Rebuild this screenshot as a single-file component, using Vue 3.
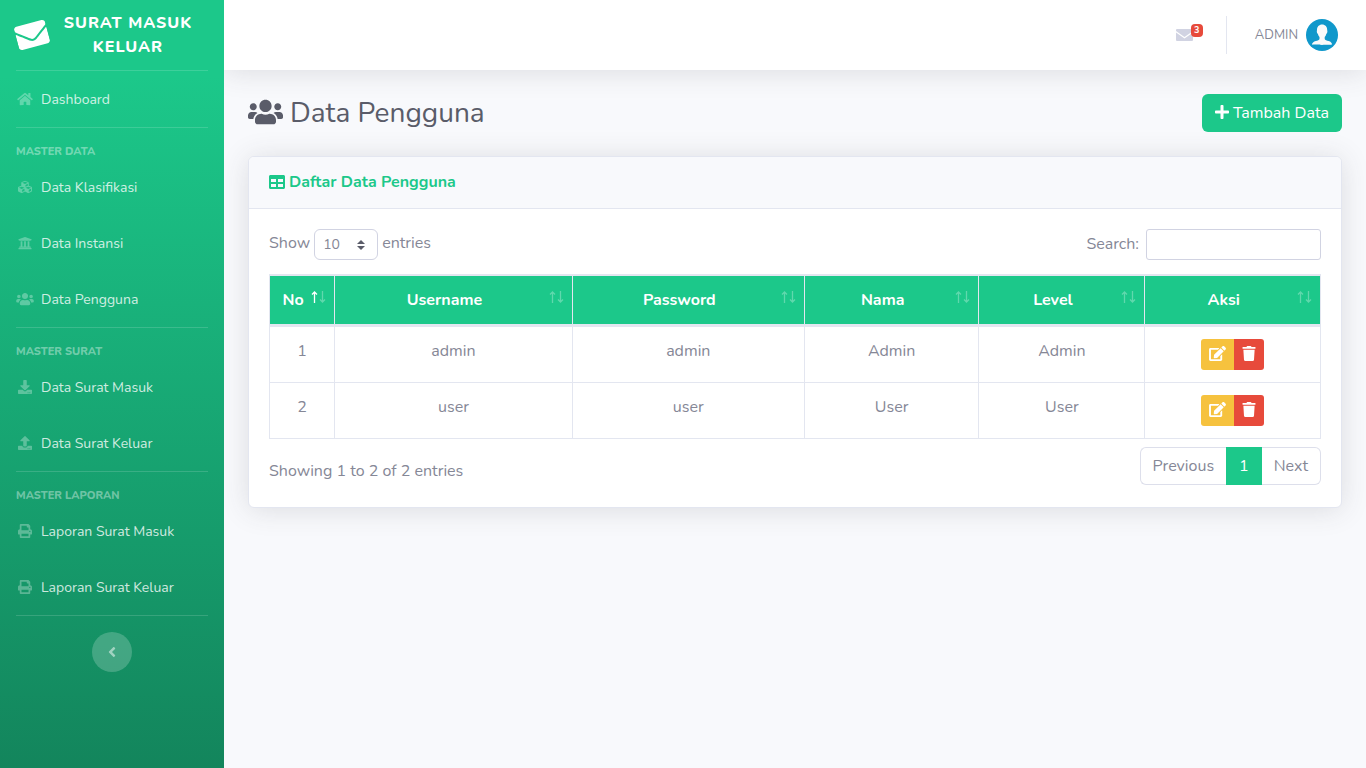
<script setup>
import { ref } from 'vue'

const icons = {
  home: { w: 576, d: 'M280.37 148.26L96 300.11V464a16 16 0 0 0 16 16l112.06-.29a16 16 0 0 0 15.92-16V368a16 16 0 0 1 16-16h64a16 16 0 0 1 16 16v95.64a16 16 0 0 0 16 16.05L464 480a16 16 0 0 0 16-16V300L295.67 148.26a12.19 12.19 0 0 0-15.3 0zM571.6 251.47L488 182.56V44.05a12 12 0 0 0-12-12h-56a12 12 0 0 0-12 12v72.61L318.47 43a48 48 0 0 0-61 0L4.34 251.47a12 12 0 0 0-1.6 16.9l25.5 31A12 12 0 0 0 45.15 301l235.22-193.74a12.19 12.19 0 0 1 15.3 0L530.9 301a12 12 0 0 0 16.9-1.6l25.5-31a12 12 0 0 0-1.7-16.93z' },
  cubes: { w: 512, d: 'M488.6 250.2L392 214V105.5c0-15-9.3-28.4-23.4-33.7l-100-37.5c-8.1-3.1-17.1-3.1-25.3 0l-100 37.5c-14.1 5.3-23.4 18.7-23.4 33.7V214l-96.6 36.2C9.3 255.5 0 268.9 0 283.9V394c0 13.6 7.7 26.1 19.9 32.2l100 50c10.1 5.1 22.1 5.1 32.2 0l103.9-52 103.9 52c10.1 5.1 22.1 5.1 32.2 0l100-50c12.2-6.1 19.9-18.6 19.9-32.2V283.9c0-15-9.3-28.4-23.4-33.7zM358 214.8l-85 31.9v-68.2l85-37v73.3zM154 104.1l102-38.2 102 38.2v.6l-102 41.4-102-41.4v-.6zm84 291.1l-85 42.5v-79.1l85-38.8v75.4zm0-112l-102 41.4-102-41.4v-.6l102-38.2 102 38.2v.6zm240 112l-85 42.5v-79.1l85-38.8v75.4zm0-112l-102 41.4-102-41.4v-.6l102-38.2 102 38.2v.6z' },
  university: { w: 512, d: 'M496 128v16a8 8 0 0 1-8 8h-24v12c0 6.627-5.373 12-12 12H60c-6.627 0-12-5.373-12-12v-12H24a8 8 0 0 1-8-8v-16a8 8 0 0 1 4.941-7.392l232-88a7.996 7.996 0 0 1 6.118 0l232 88A8 8 0 0 1 496 128zm-24 304H40c-13.255 0-24 10.745-24 24v16a8 8 0 0 0 8 8h464a8 8 0 0 0 8-8v-16c0-13.255-10.745-24-24-24zM96 192v192H60c-6.627 0-12 5.373-12 12v20h416v-20c0-6.627-5.373-12-12-12h-36V192h-64v192h-64V192h-64v192h-64V192H96z' },
  users: { w: 640, d: 'M96 224c35.3 0 64-28.7 64-64s-28.7-64-64-64-64 28.7-64 64 28.7 64 64 64zm448 0c35.3 0 64-28.7 64-64s-28.7-64-64-64-64 28.7-64 64 28.7 64 64 64zm32 32h-64c-17.6 0-33.5 7.1-45.1 18.6 40.3 22.1 68.9 62 75.1 109.4h66c17.7 0 32-14.3 32-32v-32c0-35.3-28.7-64-64-64zm-256 0c61.9 0 112-50.1 112-112S381.9 32 320 32 208 82.1 208 144s50.1 112 112 112zm76.8 32h-8.3c-20.8 10-43.9 16-68.5 16s-47.6-6-68.5-16h-8.3C179.6 288 128 339.6 128 403.2V432c0 26.5 21.5 48 48 48h288c26.5 0 48-21.5 48-48v-28.8c0-63.6-51.6-115.2-115.2-115.2zm-223.7-13.4C161.5 263.1 145.6 256 128 256H64c-35.3 0-64 28.7-64 64v32c0 17.7 14.3 32 32 32h65.9c6.3-47.4 34.9-87.3 75.2-109.4z' },
  download: { w: 512, d: 'M216 0h80c13.3 0 24 10.7 24 24v168h87.7c17.8 0 26.7 21.5 14.1 34.1L269.7 378.3c-7.5 7.5-19.8 7.5-27.3 0L90.1 226.1c-12.6-12.6-3.7-34.1 14.1-34.1H192V24c0-13.3 10.7-24 24-24zm296 376v112c0 13.3-10.7 24-24 24H24c-13.3 0-24-10.7-24-24V376c0-13.3 10.7-24 24-24h146.7l49 49c20.1 20.1 52.5 20.1 72.6 0l49-49H488c13.3 0 24 10.7 24 24zm-124 88c0-11-9-20-20-20s-20 9-20 20 9 20 20 20 20-9 20-20zm64 0c0-11-9-20-20-20s-20 9-20 20 9 20 20 20 20-9 20-20z' },
  upload: { w: 512, d: 'M296 384h-80c-13.3 0-24-10.7-24-24V192h-87.7c-17.8 0-26.7-21.5-14.1-34.1L242.3 5.7c7.5-7.5 19.8-7.5 27.3 0l152.2 152.2c12.6 12.6 3.7 34.1-14.1 34.1H320v168c0 13.3-10.7 24-24 24zm216-8v112c0 13.3-10.7 24-24 24H24c-13.3 0-24-10.7-24-24V376c0-13.3 10.7-24 24-24h136v8c0 30.9 25.1 56 56 56h80c30.9 0 56-25.1 56-56v-8h136c13.3 0 24 10.7 24 24zm-124 88c0-11-9-20-20-20s-20 9-20 20 9 20 20 20 20-9 20-20zm64 0c0-11-9-20-20-20s-20 9-20 20 9 20 20 20 20-9 20-20z' },
  print: { w: 512, d: 'M448 192V77.25c0-8.49-3.37-16.62-9.37-22.63L393.37 9.37c-6-6-14.14-9.37-22.63-9.37H96C78.33 0 64 14.33 64 32v160c-35.35 0-64 28.65-64 64v112c0 8.84 7.16 16 16 16h48v96c0 17.67 14.33 32 32 32h320c17.67 0 32-14.33 32-32v-96h48c8.84 0 16-7.16 16-16V256c0-35.35-28.65-64-64-64zm-64 256H128v-96h256v96zm0-224H128V64h192v48c0 8.84 7.16 16 16 16h48v96zm48 72c-13.25 0-24-10.75-24-24 0-13.26 10.75-24 24-24s24 10.74 24 24c0 13.25-10.75 24-24 24z' },
}

const groups = [
  { title: '', links: [{ label: 'Dashboard', icon: 'home' }] },
  {
    title: 'Master Data',
    links: [
      { label: 'Data Klasifikasi', icon: 'cubes' },
      { label: 'Data Instansi', icon: 'university' },
      { label: 'Data Pengguna', icon: 'users' },
    ],
  },
  {
    title: 'Master Surat',
    links: [
      { label: 'Data Surat Masuk', icon: 'download' },
      { label: 'Data Surat Keluar', icon: 'upload' },
    ],
  },
  {
    title: 'Master Laporan',
    links: [
      { label: 'Laporan Surat Masuk', icon: 'print' },
      { label: 'Laporan Surat Keluar', icon: 'print' },
    ],
  },
]

const columns = [
  { key: 'no', label: 'No' },
  { key: 'username', label: 'Username' },
  { key: 'password', label: 'Password' },
  { key: 'nama', label: 'Nama' },
  { key: 'level', label: 'Level' },
  { key: 'aksi', label: 'Aksi' },
]

const rows = [
  { no: 1, username: 'admin', password: 'admin', nama: 'Admin', level: 'Admin' },
  { no: 2, username: 'user', password: 'user', nama: 'User', level: 'User' },
]

const pageSize = ref('10')
const search = ref('')
</script>

<template>
  <div class="layout">
    <nav class="sidebar">
      <a class="brand" href="#">
        <svg class="brand-icon" viewBox="0 0 512 512" aria-hidden="true">
          <path d="M502.3 190.8c3.9-3.1 9.7-.2 9.7 4.7V400c0 26.5-21.5 48-48 48H48c-26.5 0-48-21.5-48-48V195.6c0-5 5.7-7.8 9.7-4.7 22.4 17.4 52.1 39.5 154.1 113.6 21.1 15.4 56.7 47.8 92.2 47.6 35.7.3 72-32.8 92.3-47.6 102-74.1 131.6-96.3 154-113.7zM256 320c23.2.4 56.6-29.2 73.4-41.4 132.7-96.3 142.8-104.7 173.4-128.7 5.8-4.5 9.2-11.5 9.2-18.9v-19c0-26.5-21.5-48-48-48H48c-26.5 0-48 21.5-48 48v19c0 7.4 3.4 14.3 9.2 18.9 30.6 23.9 40.7 32.4 173.4 128.7 16.8 12.2 50.2 41.8 73.4 41.4z" />
        </svg>
        <span class="brand-text">Surat Masuk Keluar</span>
      </a>
      <div v-for="group in groups" :key="group.title" class="group">
        <div v-if="group.title" class="group-title">{{ group.title }}</div>
        <a v-for="link in group.links" :key="link.label" class="nav-link" href="#">
          <svg class="nav-icon" :viewBox="`0 0 ${icons[link.icon].w} 512`" aria-hidden="true">
            <path :d="icons[link.icon].d" />
          </svg>
          <span>{{ link.label }}</span>
        </a>
      </div>
      <div class="sidebar-end">
        <button class="toggle" type="button" aria-label="Toggle sidebar">
          <svg viewBox="0 0 256 512" aria-hidden="true">
            <path d="M31.7 239l136-136c9.4-9.4 24.6-9.4 33.9 0l22.6 22.6c9.4 9.4 9.4 24.6 0 33.9L127.9 256l96.4 96.4c9.4 9.4 9.4 24.6 0 33.9L201.7 409c-9.4 9.4-24.6 9.4-33.9 0l-136-136c-9.5-9.4-9.5-24.6-.1-34z" />
          </svg>
        </button>
      </div>
    </nav>

    <div class="content">
      <header class="topbar">
        <a class="messages" href="#" aria-label="Messages">
          <svg viewBox="0 0 17 12" aria-hidden="true">
            <path d="M1 0h15q1 0 1 1v1L8.500 8 0 2V1q0-1 1-1z" />
            <path d="M0 3.500L8.500 9.500 17 3.500V11q0 1-1 1H1q-1 0-1-1z" />
          </svg>
          <span class="badge">3</span>
        </a>
        <div class="divider"></div>
        <a class="user" href="#">
          <span>ADMIN</span>
          <svg class="avatar" viewBox="0 0 32 32" aria-hidden="true">
            <circle cx="16" cy="16" r="16" fill="#1098cb" />
            <path fill="#fafafa" d="M16 5.500c3.300 0 5.300 2.300 5.200 5.600 0 .6.200.8.2 1.500 0 1-.6 1.900-1.100 2.300-.3 1.300-.9 2.300-1.600 3v2c.3 1 2 1.500 3.900 2.100 2.200.7 3.400 1.900 3.500 3.600-1.200.5-19 .5-20.200 0 .1-1.700 1.700-2.900 3.900-3.600 1.900-.6 3.400-1.100 3.700-2.100v-2c-.7-.7-1.300-1.700-1.600-3-.5-.4-1.100-1.300-1.100-2.300 0-.7.200-.9.2-1.500-.1-3.300 1.900-5.600 5.200-5.600z" />
          </svg>
        </a>
      </header>

      <main class="main">
        <div class="heading">
          <h1>
            <svg viewBox="0 0 640 512" aria-hidden="true"><path :d="icons.users.d" /></svg>
            <span>Data Pengguna</span>
          </h1>
          <a class="add" href="#">
            <svg viewBox="0 0 448 512" aria-hidden="true">
              <path d="M416 208H272V64c0-17.67-14.33-32-32-32h-32c-17.67 0-32 14.33-32 32v144H32c-17.67 0-32 14.33-32 32v32c0 17.67 14.33 32 32 32h144v144c0 17.67 14.33 32 32 32h32c17.67 0 32-14.33 32-32V304h144c17.67 0 32-14.33 32-32v-32c0-17.67-14.33-32-32-32z" />
            </svg>
            <span>Tambah Data</span>
          </a>
        </div>

        <section class="card">
          <div class="card-header">
            <h2>
              <svg viewBox="0 0 512 512" aria-hidden="true">
                <path d="M464 32H48C21.490 32 0 53.490 0 80v352c0 26.510 21.490 48 48 48h416c26.510 0 48-21.490 48-48V80c0-26.510-21.490-48-48-48zM224 416H64v-96h160v96zm0-160H64v-96h160v96zm224 160H288v-96h160v96zm0-160H288v-96h160v96z" />
              </svg>
              <span>Daftar Data Pengguna</span>
            </h2>
          </div>
          <div class="card-body">
            <div class="controls">
              <label class="length">
                Show
                <span class="select-wrap">
                  <select v-model="pageSize">
                    <option>10</option>
                    <option>25</option>
                    <option>50</option>
                    <option>100</option>
                  </select>
                  <svg viewBox="0 0 8 10" aria-hidden="true"><path d="M4 0l4 4H0zM4 10L0 6h8z" /></svg>
                </span>
                entries
              </label>
              <label class="search">
                Search:
                <input v-model="search" type="search" />
              </label>
            </div>

            <table>
              <colgroup>
                <col v-for="col in columns" :key="col.key" :class="`col-${col.key}`" />
              </colgroup>
              <thead>
                <tr>
                  <th v-for="(col, i) in columns" :key="col.key" scope="col">
                    {{ col.label }}
                    <svg class="sort" viewBox="0 0 16 14" aria-hidden="true">
                      <path :class="{ on: i === 0 }" d="M4.500 13V2M2 4.500l2.500-2.500 2.500 2.500" />
                      <path d="M12.500 1v11M10 9.500l2.500 2.500 2.500-2.500" />
                    </svg>
                  </th>
                </tr>
              </thead>
              <tbody>
                <tr v-for="row in rows" :key="row.no">
                  <td>{{ row.no }}</td>
                  <td>{{ row.username }}</td>
                  <td>{{ row.password }}</td>
                  <td>{{ row.nama }}</td>
                  <td>{{ row.level }}</td>
                  <td>
                    <div class="actions">
                      <button class="edit" type="button" aria-label="Edit">
                        <svg viewBox="0 0 576 512" aria-hidden="true">
                          <path d="M402.6 83.2l90.2 90.2c3.8 3.8 3.8 10 0 13.8L274.4 405.6l-92.8 10.3c-12.4 1.4-22.9-9.1-21.5-21.5l10.3-92.8L388.8 83.2c3.8-3.8 10-3.8 13.8 0zm162-22.9l-48.8-48.8c-15.2-15.2-39.9-15.2-55.2 0l-35.4 35.4c-3.8 3.8-3.8 10 0 13.8l90.2 90.2c3.8 3.8 10 3.8 13.8 0l35.4-35.4c15.2-15.3 15.2-40 0-55.2zM384 346.2V448H64V128h229.8c3.2 0 6.2-1.3 8.500-3.500l40-40c7.600-7.600 2.200-20.500-8.500-20.500H48C21.500 64 0 85.500 0 112v352c0 26.500 21.500 48 48 48h352c26.500 0 48-21.500 48-48V306.200c0-10.700-12.900-16-20.500-8.500l-40 40c-2.200 2.300-3.500 5.300-3.500 8.500z" />
                        </svg>
                      </button>
                      <button class="delete" type="button" aria-label="Hapus">
                        <svg viewBox="0 0 448 512" aria-hidden="true">
                          <path d="M432 32H312l-9.4-18.7A24 24 0 0 0 281.1 0H166.800a23.720 23.720 0 0 0-21.400 13.300L136 32H16A16 16 0 0 0 0 48v32a16 16 0 0 0 16 16h416a16 16 0 0 0 16-16V48a16 16 0 0 0-16-16zM53.200 467a48 48 0 0 0 47.900 45h245.800a48 48 0 0 0 47.900-45L416 128H32z" />
                        </svg>
                      </button>
                    </div>
                  </td>
                </tr>
              </tbody>
            </table>

            <div class="table-footer">
              <div class="info">Showing 1 to 2 of 2 entries</div>
              <nav class="pagination" aria-label="Pagination">
                <a href="#">Previous</a>
                <a class="active" href="#" aria-current="page">1</a>
                <a href="#">Next</a>
              </nav>
            </div>
          </div>
        </section>
      </main>
    </div>
  </div>
</template>

<style>
body {
  margin: 0;
}
</style>

<style scoped>
.layout,
.layout * {
  box-sizing: border-box;
}
.layout {
  display: flex;
  min-height: 100vh;
  font-family: Nunito, Lato, "Open Sans", sans-serif;
  font-size: 16px;
  line-height: 24px;
  color: #858796;
  background: #f8f9fc;
}
svg {
  display: block;
  flex: none;
  fill: currentColor;
}
a {
  color: inherit;
  text-decoration: none;
}
button,
select,
input {
  font: inherit;
  color: inherit;
}
button {
  cursor: pointer;
}

.sidebar {
  position: relative;
  z-index: 1;
  flex: none;
  width: 224px;
  background: linear-gradient(180deg, #1cc88a 10%, #13855c 100%);
}
.brand {
  display: flex;
  align-items: center;
  height: 70px;
  padding: 0 16px;
  color: #fff;
}
.brand-icon {
  width: 32px;
  height: 32px;
  transform: rotate(-15deg);
}
.brand-text {
  flex: 1;
  font-weight: 800;
  letter-spacing: 1px;
  text-align: center;
  text-transform: uppercase;
}
.group::before,
.sidebar-end::before {
  content: "";
  display: block;
  height: 1px;
  margin: 0 16px;
  background: rgba(255, 255, 255, 0.15);
}
.group-title {
  padding: 16px 16px 0;
  font-size: 11px;
  font-weight: 800;
  line-height: 15px;
  text-transform: uppercase;
  color: rgba(255, 255, 255, 0.4);
}
.nav-link {
  display: flex;
  align-items: center;
  gap: 7px;
  height: 56px;
  padding: 0 16px;
  font-size: 14px;
  color: rgba(255, 255, 255, 0.8);
}
.nav-link span {
  padding-top: 2px;
}
.nav-icon {
  width: 18px;
  height: 14px;
  color: rgba(255, 255, 255, 0.3);
}
.sidebar-end {
  display: grid;
  justify-items: center;
  gap: 16px;
}
.sidebar-end::before {
  justify-self: stretch;
}
.toggle {
  display: grid;
  place-items: center;
  width: 40px;
  height: 40px;
  padding: 0;
  border: 0;
  border-radius: 50%;
  background: rgba(255, 255, 255, 0.2);
  color: rgba(255, 255, 255, 0.5);
}
.toggle svg {
  width: 8px;
  height: 16px;
}

.content {
  flex: 1;
  min-width: 0;
}
.topbar {
  position: relative;
  display: flex;
  align-items: center;
  justify-content: flex-end;
  height: 70px;
  padding-right: 28px;
  background: #fff;
  box-shadow: 0 2px 28px rgba(58, 59, 69, 0.15);
}
.messages {
  position: relative;
  color: #d1d3e2;
}
.messages svg {
  width: 17px;
  height: 12px;
}
.badge {
  position: absolute;
  left: 15px;
  top: -5px;
  width: 12px;
  border-radius: 4px;
  background: #e74a3b;
  color: #fff;
  font-size: 9px;
  font-weight: 700;
  line-height: 13px;
  text-align: center;
}
.divider {
  width: 1px;
  height: 38px;
  margin: 0 28px 0 33px;
  background: #e3e6f0;
}
.user {
  display: flex;
  align-items: center;
  gap: 8px;
  font-size: 13px;
}
.avatar {
  width: 32px;
  height: 32px;
}

.main {
  padding: 24px;
}
.heading {
  display: flex;
  align-items: center;
  justify-content: space-between;
  margin-bottom: 24px;
}
h1 {
  display: flex;
  align-items: center;
  gap: 7px;
  margin: 0;
  font-size: 28px;
  font-weight: 400;
  line-height: 34px;
  color: #5a5c69;
}
h1 svg {
  width: 35px;
  height: 28px;
}
h1 svg,
h2 svg,
.add svg,
.actions svg {
  margin-bottom: 2px;
}
.add {
  display: flex;
  align-items: center;
  gap: 4px;
  height: 38px;
  padding: 0 13px;
  border-radius: 6px;
  background: #1cc88a;
  color: #fff;
}
.add svg {
  width: 14px;
  height: 16px;
}

.card {
  border: 1px solid #e3e6f0;
  border-radius: 6px;
  background: #fff;
  box-shadow: 0 2px 28px rgba(58, 59, 69, 0.15);
}
.card-header {
  padding: 16px 20px;
  border-bottom: 1px solid #e3e6f0;
  border-radius: 5px 5px 0 0;
  background: #f8f9fc;
}
h2 {
  display: flex;
  align-items: center;
  gap: 4px;
  margin: 0;
  font-size: 16px;
  font-weight: 700;
  line-height: 19px;
  color: #1cc88a;
}
h2 svg {
  width: 16px;
  height: 16px;
}
.card-body {
  padding: 20px;
}
.controls {
  display: flex;
  justify-content: space-between;
  margin-bottom: 14px;
}
.length,
.search {
  display: flex;
}
.length {
  gap: 4px;
  line-height: 28px;
}
.search {
  gap: 7px;
  line-height: 30px;
}
.select-wrap {
  position: relative;
}
.select-wrap svg {
  position: absolute;
  right: 13px;
  top: 11px;
  width: 8px;
  height: 10px;
  color: #5a5c69;
  pointer-events: none;
}
select,
input {
  display: block;
  height: 31px;
  border: 1px solid #d1d3e2;
  background: #fff;
  outline: 0;
}
select {
  width: 64px;
  padding: 0 8px;
  border-radius: 6px;
  font-size: 14px;
  appearance: none;
}
input {
  width: 175px;
  padding: 4px 8px;
  border-radius: 3px;
  font-size: 14px;
}

table {
  width: 100%;
  border: solid #e3e6f0;
  border-width: 1px 1px 1px 0;
  border-collapse: separate;
  border-spacing: 0;
  table-layout: fixed;
}
.col-no {
  width: 6.2%;
}
.col-username {
  width: 22.6%;
}
.col-password {
  width: 22.1%;
}
.col-nama {
  width: 16.6%;
}
.col-level {
  width: 15.8%;
}
th,
td {
  padding: 12px;
  border: solid #e3e6f0;
  border-width: 1px 0 0 1px;
  text-align: center;
  vertical-align: top;
}
th {
  position: relative;
  padding-right: 30px;
  border-bottom-width: 2px;
  background: #1cc88a;
  background-clip: padding-box;
  color: #fff;
  font-weight: 700;
}
.sort {
  position: absolute;
  right: 8px;
  top: 14px;
  width: 16px;
  height: 14px;
  fill: none;
  stroke: #fff;
  stroke-width: 1.3;
}
.sort path {
  opacity: 0.3;
}
.sort .on {
  opacity: 1;
}
.actions {
  display: flex;
  justify-content: center;
}
.actions button {
  display: grid;
  place-items: center;
  height: 31px;
  padding: 0 8px;
  border: 0;
  color: #fff;
}
.actions .edit {
  border-radius: 3px 0 0 3px;
  background: #f6c23e;
}
.actions .delete {
  border-radius: 0 3px 3px 0;
  background: #e74a3b;
}
.edit svg {
  width: 17px;
  height: 15px;
}
.delete svg {
  width: 14px;
  height: 15px;
}

.table-footer {
  display: flex;
  align-items: flex-start;
  justify-content: space-between;
  padding: 8px 0 2px;
}
.info {
  padding-top: 12px;
}
.pagination {
  display: flex;
}
.pagination a {
  height: 38px;
  padding: 6px 12px;
  border: 1px solid #dddfeb;
}
.pagination a:first-child {
  border-right: 0;
  border-radius: 6px 0 0 6px;
}
.pagination a:last-child {
  border-left: 0;
  border-radius: 0 6px 6px 0;
}
.pagination .active {
  border-color: #1cc88a;
  background: #1cc88a;
  color: #fff;
}
</style>
